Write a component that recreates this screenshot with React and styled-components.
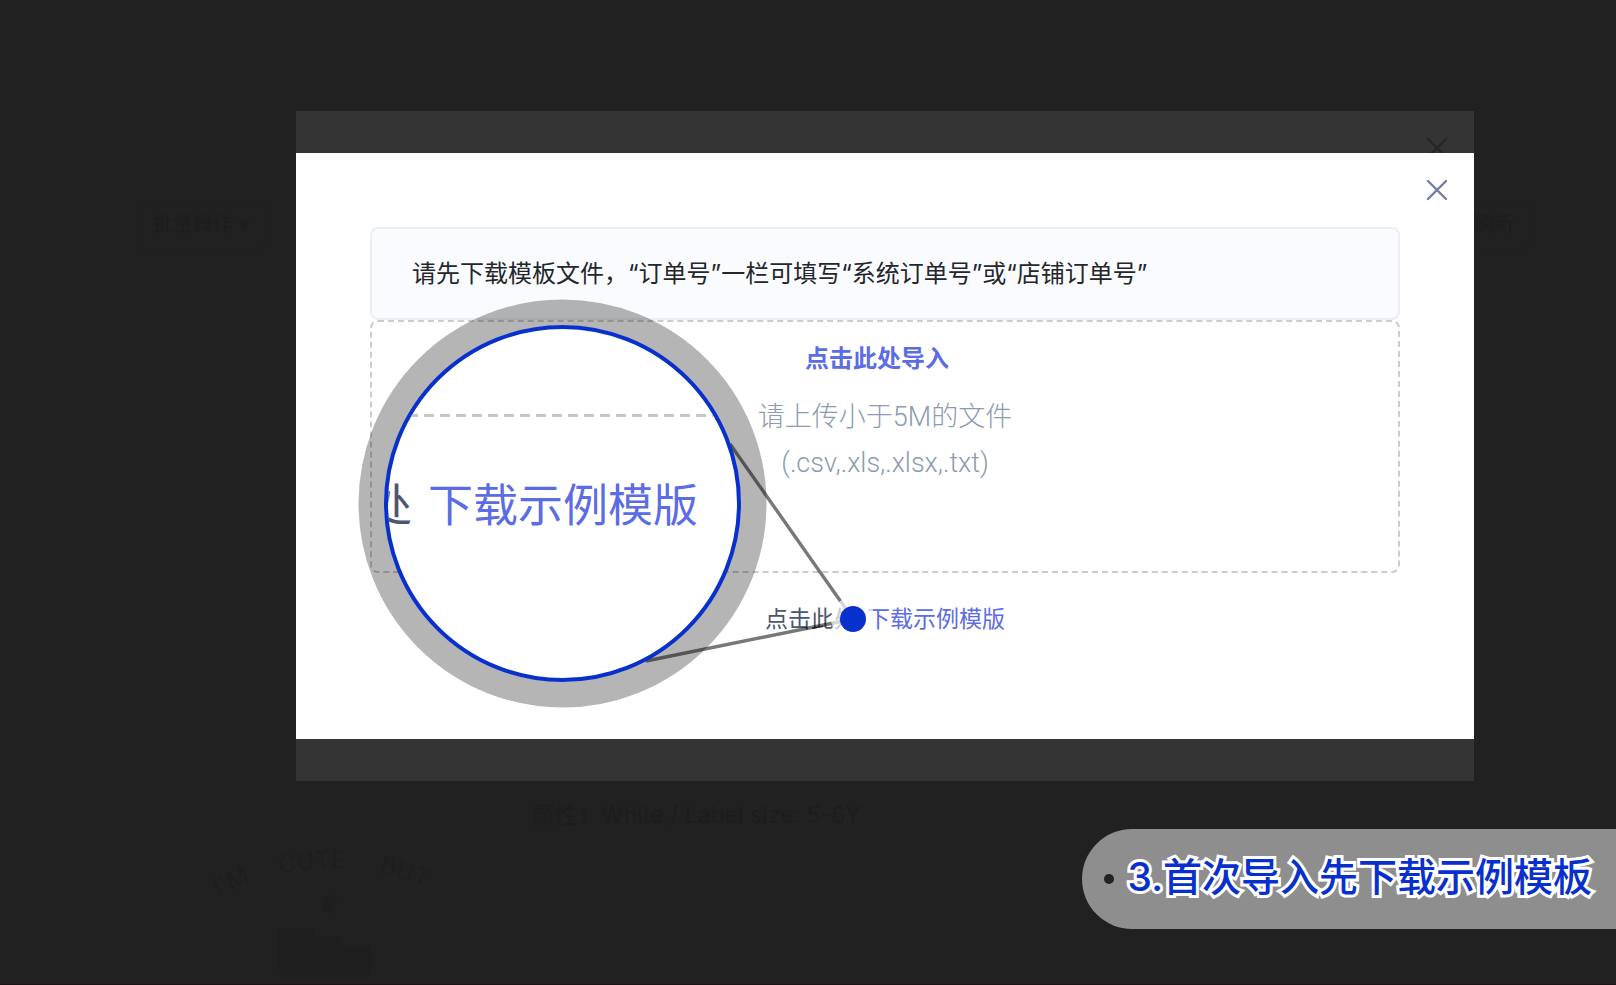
import styled, { createGlobalStyle } from "styled-components";

const GlobalStyle = createGlobalStyle`
  * {
    box-sizing: border-box;
  }
  body {
    margin: 0;
    background-color: #212121;
    font-family: Inter, "Noto Sans CJK SC", sans-serif;
  }
`;

const Page = styled.div`
  position: relative;
  min-height: 100vh;
  padding-top: 111px;
  overflow: hidden;
  border-bottom: 1px solid #1c1217;
  display: flex;
  flex-direction: column;
`;

/* the order list, almost lost behind the mask */
const DimmedList = styled.div`
  position: absolute;
  inset: 0;
  color: #1d1d1d;
`;

const DimmedToolbar = styled.div`
  display: flex;
  justify-content: space-between;
  padding: 201px 86px 0 137px;
`;

const DimmedTag = styled.div`
  height: 48px;
  padding: 0 15px;
  border: 1px solid #1f1f1f;
  border-radius: 6px;
  font-size: 20px;
  line-height: 44px;
`;

const DimmedText = styled.div`
  margin: 550px 0 0 532px;
  font-size: 23px;
  line-height: 32px;
`;

const DimmedPrint = styled.svg`
  position: absolute;
  left: 200px;
  top: 830px;
`;

const Dialog = styled.div`
  position: relative;
  margin: 0 142px 0 296px;
`;

const Strip = styled.div`
  height: 42px;
  padding: 25px 25px 0 0;
  overflow: hidden;
  background-color: #343434;
  display: flex;
  justify-content: flex-end;
  align-items: flex-start;
  color: #262626;
`;

const Panel = styled.div`
  position: relative;
  padding: 0 74px 102px 74px;
  background-color: #ffffff;
`;

const PanelHead = styled.div`
  height: 74px;
  margin-right: -49px;
  padding-top: 25px;
  display: flex;
  justify-content: flex-end;
  align-items: flex-start;
`;

const CloseButton = styled.button`
  padding: 0;
  border: none;
  background: none;
  color: #747c9f;
  cursor: pointer;
  display: flex;
`;

const Notice = styled.div`
  padding: 27px 40px;
  border: 2px solid #eceef2;
  border-radius: 8px;
  background-color: #fafbfe;
  color: #24262a;
  font-size: 24px;
  line-height: 35px;
`;

const DropZone = styled.div`
  height: 253px;
  padding-top: 21px;
  border: 2px dashed #cccccc;
  border-radius: 8px;
  display: flex;
  flex-direction: column;
  align-items: center;
`;

const ImportButton = styled.button`
  margin: 0 16px 19px 0;
  padding: 0;
  border: none;
  background: none;
  color: #5c6ce4;
  font-family: inherit;
  font-size: 24px;
  font-weight: bold;
  line-height: 32px;
  cursor: pointer;
`;

const Hint = styled.div`
  color: #8c9bb1;
  font-family: Roboto, "Noto Sans CJK SC", sans-serif;
  font-size: 27px;
  font-weight: 300;
  line-height: 46px;
  text-align: center;
`;

const Footer = styled.div`
  padding-top: 29px;
  color: #4c5670;
  font-size: 23px;
  line-height: 35px;
  display: flex;
  justify-content: center;
  gap: 10px;
`;

const TemplateLink = styled.a`
  color: #5c6ce4;
  text-decoration: none;
`;

/* magnifier and its pointer, laid over the dialog round its centre */
const Callout = styled.div`
  position: absolute;
  left: 50%;
  top: 146px;
  width: 530px;
  height: 410px;
  margin-left: -527px;
  pointer-events: none;
`;

const Pointer = styled.svg`
  position: absolute;
  inset: 0;
`;

const Lens = styled.div`
  position: absolute;
  left: 26px;
  top: 26px;
  width: 357px;
  height: 357px;
  padding-top: 85px;
  overflow: hidden;
  border: 4px solid #0830cc;
  border-radius: 50%;
  background-color: #ffffff;
`;

const LensText = styled.div`
  margin: 59px 0 0 -21px;
  color: #4c5670;
  font-size: 45px;
  line-height: 60px;
  white-space: nowrap;
  display: flex;
  gap: 16px;
`;

const LensTemplate = styled.span`
  color: #5c6ce4;
`;

const Caption = styled.div`
  position: relative;
  align-self: flex-end;
  height: 100px;
  margin-top: 48px;
  padding: 0 24px 4px 22px;
  border-radius: 50px 0 0 50px;
  background-color: #8e8e8e;
  display: flex;
  align-items: center;
  gap: 14px;
`;

const Bullet = styled.div`
  width: 10px;
  height: 10px;
  margin-top: 4px;
  border-radius: 50%;
  background-color: #222222;
`;

const CaptionText = styled.div`
  color: #0830cc;
  font-size: 39px;
  font-weight: 500;
  line-height: 60px;
  -webkit-text-stroke: 6px #ffffff;
  paint-order: stroke fill;
  stroke-linejoin: round;
`;

function CrossIcon() {
  return (
    <svg width="24" height="24" viewBox="0 0 24 24" fill="none" stroke="currentColor" strokeWidth="2.4" strokeLinecap="round">
      <path d="M3 3L21 21M21 3L3 21" />
    </svg>
  );
}

function Magnifier() {
  return (
    <Callout>
      <Pointer width="530" height="410" viewBox="0 0 530 410">
        <circle cx="204.5" cy="204.5" r="191" fill="none" stroke="#000000" strokeOpacity="0.29" strokeWidth="26" />
        <path d="M372 145L495 320M288 362L495 320" stroke="#000000" strokeOpacity="0.53" strokeWidth="3.4" />
        <circle cx="495" cy="320" r="22" fill="#ffffff" fillOpacity="0.7" />
        <circle cx="495" cy="320" r="13" fill="#0830cc" />
      </Pointer>
      <Lens>
        <svg width="349" height="3" viewBox="0 0 349 3" display="block">
          <path d="M20 1.5H325" stroke="#c6c6c6" strokeWidth="3" strokeDasharray="10 6" />
        </svg>
        <LensText>
          <span>处</span>
          <LensTemplate>下载示例模版</LensTemplate>
        </LensText>
      </Lens>
    </Callout>
  );
}

function App() {
  return (
    <>
      <GlobalStyle />
      <Page>
        <DimmedList aria-hidden="true">
          <DimmedToolbar>
            <DimmedTag>批量操作 ▾</DimmedTag>
            <DimmedTag>刷新</DimmedTag>
          </DimmedToolbar>
          <DimmedText>属性：White / Label size: 5-6Y</DimmedText>
          <DimmedPrint width="280" height="155" viewBox="0 0 280 155" fill="#1e1e1e">
            <path id="arc" d="M18 66Q130 10 246 66" fill="none" />
            <text fontSize="24">
              <textPath href="#arc">I'M</textPath>
              <textPath href="#arc" startOffset="66">CUTE</textPath>
              <textPath href="#arc" startOffset="166">BUT</textPath>
            </text>
            <path d="M122 70l7-6 8 7-6 12-8-2zM78 98h36l4 8h22l6 10h22l8 14-8 18H82l-6-22z" fill="#201f1f" />
          </DimmedPrint>
        </DimmedList>
        <Dialog>
          <Strip>
            <CrossIcon />
          </Strip>
          <Panel>
            <PanelHead>
              <CloseButton aria-label="关闭">
                <CrossIcon />
              </CloseButton>
            </PanelHead>
            <Notice>请先下载模板文件，“订单号”一栏可填写“系统订单号”或“店铺订单号”</Notice>
            <DropZone>
              <ImportButton>点击此处导入</ImportButton>
              <Hint>请上传小于5M的文件</Hint>
              <Hint>(.csv,.xls,.xlsx,.txt)</Hint>
            </DropZone>
            <Footer>
              <span>点击此处</span>
              <TemplateLink href="#template">下载示例模版</TemplateLink>
            </Footer>
            <Magnifier />
          </Panel>
          <Strip />
        </Dialog>
        <Caption>
          <Bullet />
          <CaptionText>3.首次导入先下载示例模板</CaptionText>
        </Caption>
      </Page>
    </>
  );
}

export default App;
